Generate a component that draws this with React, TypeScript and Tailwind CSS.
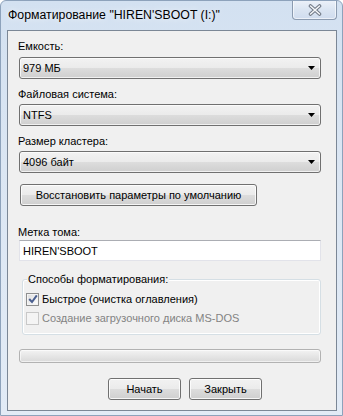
import React from "react";

function Arrow() {
  return (
    <svg width="7" height="4" viewBox="0 0 7 4" className="block">
      <path d="M0 0 H7 L3.5 4 Z" fill="#000" />
    </svg>
  );
}

function Combo({ value }: { value: string }) {
  return (
    <div className="ml-[11px] w-[302px] h-[22px] rounded-[3px] border border-[#707070] bg-[linear-gradient(to_bottom,#f2f2f2_0%,#ebebeb_50%,#dddddd_50%,#cfcfcf_100%)] shadow-[inset_0_0_0_1px_rgba(255,255,255,0.7)] flex items-center pl-[3px] pr-[5px]">
      <span className="flex-1 leading-[16px] whitespace-nowrap">{value}</span>
      <Arrow />
    </div>
  );
}

function Btn({ children, w, className = "" }: { children: React.ReactNode; w: string; className?: string }) {
  return (
    <div
      className={`${w} ${className} h-[22px] rounded-[3px] border border-[#707070] bg-[linear-gradient(to_bottom,#f2f2f2_0%,#ebebeb_50%,#dddddd_50%,#cfcfcf_100%)] shadow-[inset_0_0_0_1px_rgba(255,255,255,0.8)] flex items-center justify-center leading-[16px] whitespace-nowrap`}
    >
      {children}
    </div>
  );
}

function Label({ children, className = "" }: { children: React.ReactNode; className?: string }) {
  return <div className={`ml-[10px] h-[16px] leading-[16px] whitespace-nowrap ${className}`}>{children}</div>;
}

export default function App() {
  return (
    <div
      className="w-[343px] h-[416px] relative overflow-hidden flex flex-col rounded-t-[6px] border border-[#8da2bb] bg-[linear-gradient(to_bottom,#d3e1f1_0%,#dbe6f3_40%,#e2ebf6_100%)] text-[11px] text-black"
      style={{ fontFamily: '"Liberation Sans", Arial, sans-serif' }}
    >
      <div className="h-[29px] pl-[7px] flex items-center pb-[2px] shrink-0">
        <span className="leading-[16px] text-[12.3px] whitespace-nowrap [text-shadow:0_0_6px_rgba(255,255,255,0.9)]">
          Форматирование "HIREN'SBOOT (I:)"
        </span>
      </div>
      <div className="absolute left-[291px] top-[-1px] w-[45px] h-[20px] rounded-b-[4px] border border-[#8b9bb0] border-t-0 bg-[linear-gradient(to_bottom,#edf2f9_0%,#dbe5f2_50%,#cfdcee_100%)] shadow-[inset_0_0_0_1px_rgba(255,255,255,0.6)] flex items-center justify-center">
        <svg width="14" height="12" viewBox="0 0 14 12" className="block">
          <path d="M2.5 2 L11.5 10 M11.5 2 L2.5 10" stroke="#6e7784" strokeWidth="3.6" strokeLinecap="round" fill="none" />
          <path d="M2.5 2 L11.5 10 M11.5 2 L2.5 10" stroke="#f4f6f9" strokeWidth="1.6" strokeLinecap="round" fill="none" />
        </svg>
      </div>

      <div className="ml-[6px] w-[330px] h-[381px] border border-[#7b8796] bg-[#f0f0f0] flex flex-col">
        <Label className="mt-[7px]">Емкость:</Label>
        <div className="mt-[3px]"><Combo value="979 МБ" /></div>
        <Label className="mt-[7px]">Файловая система:</Label>
        <div className="mt-[2px]"><Combo value="NTFS" /></div>
        <Label className="mt-[7px]">Размер кластера:</Label>
        <div className="mt-[2px]"><Combo value="4096 байт" /></div>
        <Btn w="w-[237px]" className="mt-[11px] ml-[12px]">Восстановить параметры по умолчанию</Btn>
        <Label className="mt-[18px]">Метка тома:</Label>
        <div className="ml-[11px] w-[302px] h-[21px] bg-white border border-[#e2e3ea] border-t-[#abadb3] flex items-center pl-[3px] leading-[16px]">
          HIREN'SBOOT
        </div>

        <div className="mt-[18px] ml-[14px] w-[299px] h-[56px] relative rounded-[3px] border border-[#d5dfe5] shadow-[inset_0_0_0_1px_#ffffff] flex flex-col">
          <div className="absolute left-[4px] top-[-9px] px-[1px] bg-[#f0f0f0] leading-[16px] whitespace-nowrap">
            Способы форматирования:
          </div>
          <div className="mt-[11px] ml-[3px] h-[16px] flex items-center">
            <div className="w-[13px] h-[13px] border border-[#8e8f8f] bg-[linear-gradient(to_bottom_right,#dcdcdc,#ffffff)] shadow-[inset_0_0_0_1px_#f4f4f4] flex items-center justify-center">
              <svg width="10" height="10" viewBox="0 0 10 10" className="block">
                <path d="M1.2 5 L4 8 L8.8 1.3" stroke="#4a5f8f" strokeWidth="2" fill="none" />
              </svg>
            </div>
            <span className="ml-[3px] leading-[16px] whitespace-nowrap">Быстрое (очистка оглавления)</span>
          </div>
          <div className="mt-[3px] ml-[3px] h-[16px] flex items-center">
            <div className="w-[13px] h-[13px] border border-[#c8c8c8] bg-[#f4f4f4]" />
            <span className="ml-[3px] leading-[16px] whitespace-nowrap text-[#838383]">Создание загрузочного диска MS-DOS</span>
          </div>
        </div>

        <div className="mt-[14px] ml-[11px] w-[302px] h-[14px] rounded-[3px] border border-[#b2b2b2] bg-[linear-gradient(to_bottom,#f3f3f3_0%,#e6e6e6_50%,#d9d9d9_100%)] shadow-[inset_0_0_0_1px_rgba(255,255,255,0.6)]" />

        <div className="mt-[15px] ml-[100px] flex gap-[8px]">
          <Btn w="w-[73px]">Начать</Btn>
          <Btn w="w-[73px]">Закрыть</Btn>
        </div>
      </div>
    </div>
  );
}
